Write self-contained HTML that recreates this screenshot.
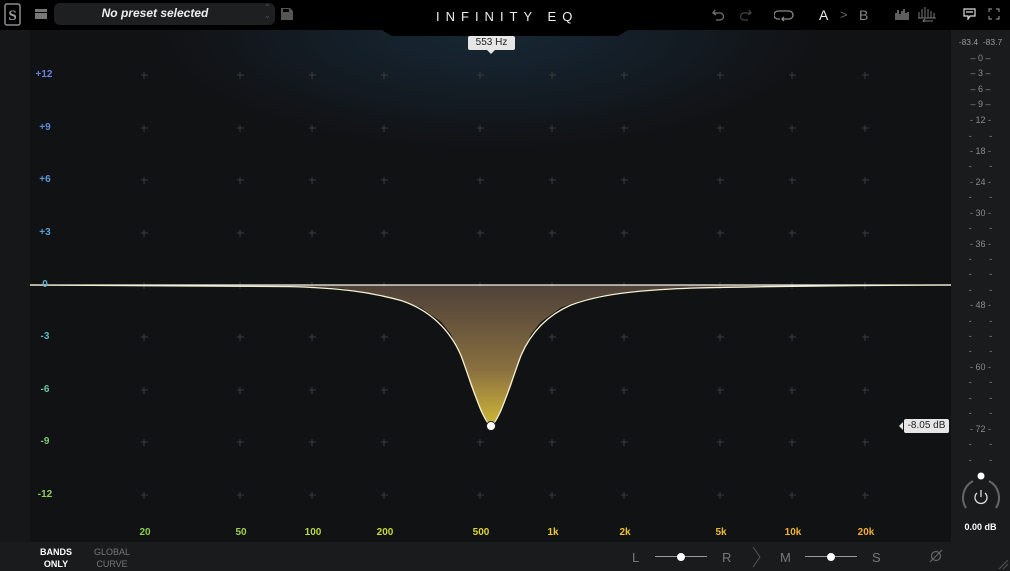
<!DOCTYPE html>
<html><head><meta charset="utf-8"><style>
*{margin:0;padding:0;box-sizing:border-box}
body{width:1010px;height:571px;overflow:hidden;background:#111214;font-family:"Liberation Sans",sans-serif;position:relative}
.abs{position:absolute}
#top{left:0;top:0;width:1010px;height:30px;background:#000}
#left{left:0;top:30px;width:30px;height:512px;background:#161718}
#graph{left:30px;top:30px;width:921px;height:512px;background:radial-gradient(ellipse 330px 120px at 460px 0px,#182835 0%,#141e27 45%,rgba(17,18,20,0) 100%),#111214}
#right{left:951px;top:30px;width:59px;height:512px;background:#1a1b1d}
#bottom{left:0;top:542px;width:1010px;height:29px;background:#1a1b1d}
.yl{position:absolute;font-size:10px;font-weight:bold;width:30px;text-align:center;left:30px}
.fl{position:absolute;font-size:10px;font-weight:bold;top:527px;transform:translateX(-50%)}
.mt{position:absolute;font-size:9px;color:#8a8b8d;width:59px;text-align:center;left:951px;letter-spacing:0;white-space:pre}
</style></head><body>
<div id="top" class="abs"></div>
<div id="left" class="abs"></div>
<div id="graph" class="abs"></div>
<div id="right" class="abs"></div>
<div id="bottom" class="abs"></div>
<svg class="abs" style="left:380px;top:29px" width="250" height="8"><path d="M0 0 L250 0 L238 7 L12 7 Z" fill="#000"/></svg>
<svg class="abs" style="left:4px;top:3px" width="17" height="23"><rect x="1" y="1" width="15" height="21" rx="2" fill="none" stroke="#8c8d8f" stroke-width="1.5"/><text x="8.5" y="17" font-size="15" font-family="Liberation Serif" font-weight="bold" fill="#9a9b9d" text-anchor="middle">S</text></svg>
<div class="abs" style="left:35px;top:9px;width:12px;height:3px;background:#777"></div>
<div class="abs" style="left:35px;top:13px;width:12px;height:6px;background:#777"></div>
<div class="abs" style="left:54px;top:3px;width:221px;height:22px;border-radius:6px;background:#1e1f21"></div>
<div class="abs" style="left:54px;top:6px;width:202px;text-align:center;color:#eee;font-size:12px;font-style:italic;font-weight:bold">No preset selected</div>
<div class="abs" style="left:264px;top:4px;color:#555;font-size:8px;line-height:8px">⌃<br>⌄</div>
<svg class="abs" style="left:281px;top:8px" width="12" height="12"><path d="M0 0H9L12 3V12H0Z" fill="#555"/><rect x="2" y="1" width="6" height="3" fill="#000"/></svg>
<div class="abs" style="left:436px;top:9px;color:#eee;font-size:13px;letter-spacing:6px">INFINITY EQ</div>
<svg class="abs" style="left:712px;top:7px" width="40" height="14" fill="none" stroke-width="1.2"><path d="M3 3 L1 6 L4 8 M1 6 H8 A3.5 3.5 0 0 1 8 13 H4" stroke="#777"/><path d="M37 3 L39 6 L36 8 M39 6 H32 A3.5 3.5 0 0 0 32 13 H36" stroke="#444"/></svg>
<svg class="abs" style="left:774px;top:8px" width="20" height="14" fill="none" stroke="#888" stroke-width="1.3"><path d="M6 11 H4 A4 4 0 0 1 4 3 H15 A4 4 0 0 1 15 11 H8 M10 9 L8 11 L10 13"/></svg>
<div class="abs" style="left:819px;top:7px;color:#eee;font-size:14px">A</div>
<div class="abs" style="left:840px;top:7px;color:#666;font-size:13px">&gt;</div>
<div class="abs" style="left:859px;top:7px;color:#888;font-size:14px">B</div>
<svg class="abs" style="left:895px;top:8px" width="14" height="12" stroke="#bbb" stroke-width="1"><path d="M1 5V12M3 2V12M5 6V12M7 3V12M9 1V12M11 5V12M13 4V12"/></svg>
<svg class="abs" style="left:917px;top:6px" width="20" height="16" fill="none" stroke="#777" stroke-width="1"><path d="M2 12V6M5 12V3M8 12V1M11 12V3M14 12V5M17 12V7M1 12H19M6 15H16M8 13L6 15L8 17"/></svg>
<svg class="abs" style="left:963px;top:8px" width="13" height="12" fill="none" stroke="#ddd" stroke-width="1.2"><path d="M1 1H12V8H7L5 11V8H1Z M3 4H10"/></svg>
<svg class="abs" style="left:988px;top:8px" width="12" height="12" fill="none" stroke="#888" stroke-width="1.2"><path d="M1 4V1H4M8 1H11V4M11 8V11H8M4 11H1V8"/></svg>

<svg class="abs" style="left:0;top:0" width="1010" height="571">
<defs><linearGradient id="fg" x1="0" y1="285" x2="0" y2="426" gradientUnits="userSpaceOnUse"><stop offset="0" stop-color="#5a4a40" stop-opacity="0.85"/><stop offset="0.6" stop-color="#8a7040"/><stop offset="1" stop-color="#d0b838"/></linearGradient></defs>
<g id="grid" stroke="#393b3e" stroke-width="1"></g>
<path d="M30 285 L191 285.5 L291 286.1 L341 288.1 L381 295.6 L401 300.5 L421 307.6 L441 321.7 L451 334.4 L461 355.5 L471 386.5 L481 412 L491 426 L501 412 L511 386.5 L521 355.5 L531 334.4 L541 321.7 L561 307.6 L581 300.5 L601 295.6 L641 290.6 L691 288.1 L791 286.1 L951 285 Z" fill="url(#fg)" stroke="none"/>
<line x1="30" y1="285" x2="951" y2="285" stroke="#f2f2f2" stroke-width="1.2"/>
<path d="M30 285 C150 285.5 250 286 291 286.6 C340 288 370 292 401 300.5 C430 310 450 330 461 355.5 C472 385 482 420 491 426 C500 420 510 385 521 355.5 C532 330 550 314 571 305 C600 294 640 290 691 288.1 C760 286.5 850 285.3 951 285" fill="none" stroke="#f4efd0" stroke-width="1.3"/>
<circle cx="491" cy="426" r="4.5" fill="#fff" stroke="#222" stroke-width="1"/>
</svg>
<script>
var g=document.getElementById('grid'),s='';
[144,240,312,384,480,552,624,720,792,865].forEach(function(x){[75,128,180,233,285,337,390,442,495].forEach(function(y){s+='<path d="M'+(x-3)+' '+y+'H'+(x+4)+'M'+x+' '+(y-3)+'V'+(y+4)+'"/>';});});
g.innerHTML=s;
</script>
<div class="yl" style="top:69px;left:29px;color:#6a7fd8">+12</div>
<div class="yl" style="top:122px;color:#5c8ad8">+9</div>
<div class="yl" style="top:174px;color:#5a96d8">+6</div>
<div class="yl" style="top:227px;color:#58a0d8">+3</div>
<div class="yl" style="top:279px;color:#5cb0d0">0</div>
<div class="yl" style="top:331px;color:#5ab4c0">-3</div>
<div class="yl" style="top:384px;color:#6ac0a0">-6</div>
<div class="yl" style="top:436px;color:#7ac878">-9</div>
<div class="yl" style="top:489px;color:#8ed060">-12</div>
<div class="fl" style="left:145px;color:#8acc4a">20</div>
<div class="fl" style="left:241px;color:#a0d048">50</div>
<div class="fl" style="left:313px;color:#b8d840">100</div>
<div class="fl" style="left:385px;color:#c8d838">200</div>
<div class="fl" style="left:481px;color:#e0d430">500</div>
<div class="fl" style="left:553px;color:#e8cc30">1k</div>
<div class="fl" style="left:625px;color:#eec430">2k</div>
<div class="fl" style="left:721px;color:#f0bc30">5k</div>
<div class="fl" style="left:793px;color:#f2b430">10k</div>
<div class="fl" style="left:866px;color:#f2ac30">20k</div>
<div class="abs" style="left:468px;top:36px;width:47px;height:14px;background:#e6e6e6;border-radius:2px;font-size:10px;color:#222;text-align:center;line-height:14px">553 Hz</div>
<div class="abs" style="left:487px;top:50px;border:4px solid transparent;border-top-color:#e6e6e6;border-bottom:0"></div>
<div class="abs" style="left:904px;top:419px;width:45px;height:14px;background:#e6e6e6;border-radius:2px;font-size:10px;color:#222;text-align:center;line-height:14px">-8.05 dB</div>
<div class="abs" style="left:899px;top:422px;border:4px solid transparent;border-right-color:#e6e6e6;border-left:0"></div>
<div class="mt" style="top:37px;font-size:8.5px;color:#999">-83.4  -83.7</div>
<div id="meter"></div>
<script>
var lab={59:'0',74:'3',90:'6',105:'9',121:'12',152:'18',183:'24',214:'30',245:'36',306:'48',368:'60',430:'72'};
var ys=[59,74,90,105,121,137,152,167,183,198,214,229,245,260,275,291,306,322,337,352,368,383,399,414,430,445,461],h='';
ys.forEach(function(y){h+='<div class="mt" style="top:'+(y-6)+'px">'+(lab[y]?(lab[y].length>1?'- '+lab[y]+' -':'– '+lab[y]+' –'):'-       -')+'</div>';});
document.getElementById('meter').innerHTML=h;
</script>
<svg class="abs" style="left:958px;top:472px" width="46" height="40" fill="none"><path d="M8 36 A19 19 0 0 1 15 9" stroke="#666" stroke-width="2"/><path d="M31 9 A19 19 0 0 1 38 36" stroke="#666" stroke-width="2"/><circle cx="23" cy="4" r="3.5" fill="#fff"/><path d="M19 21 A6 6 0 1 0 27 21 M23 18V25" stroke="#ddd" stroke-width="1.3"/></svg>
<div class="abs" style="left:951px;top:522px;width:59px;text-align:center;color:#fff;font-size:9px;font-weight:bold">0.00 dB</div>
<div class="abs" style="left:36px;top:546px;width:40px;text-align:center;color:#fff;font-size:9px;font-weight:bold;line-height:12px">BANDS<br>ONLY</div>
<div class="abs" style="left:90px;top:546px;width:44px;text-align:center;color:#777;font-size:9px;line-height:12px">GLOBAL<br>CURVE</div>
<div class="abs" style="left:632px;top:550px;color:#777;font-size:13px">L</div>
<div class="abs" style="left:655px;top:556px;width:52px;height:1px;background:#999"></div>
<div class="abs" style="left:677px;top:553px;width:8px;height:8px;border-radius:50%;background:#fff"></div>
<div class="abs" style="left:722px;top:550px;color:#777;font-size:13px">R</div>
<svg class="abs" style="left:752px;top:546px" width="10" height="22"><path d="M1 1 L8 11 L1 21" fill="none" stroke="#555" stroke-width="1"/></svg>
<div class="abs" style="left:780px;top:550px;color:#777;font-size:13px">M</div>
<div class="abs" style="left:805px;top:556px;width:52px;height:1px;background:#999"></div>
<div class="abs" style="left:827px;top:553px;width:8px;height:8px;border-radius:50%;background:#fff"></div>
<div class="abs" style="left:872px;top:550px;color:#777;font-size:13px">S</div>
<svg class="abs" style="left:929px;top:549px" width="14" height="14" fill="none" stroke="#666" stroke-width="1.2"><circle cx="7" cy="7" r="4.5"/><path d="M1 13 L13 1"/></svg>
<svg class="abs" style="left:998px;top:559px" width="11" height="11" stroke="#555" stroke-width="1"><path d="M1 10L10 1M5 10L10 5"/></svg>
</body></html>
